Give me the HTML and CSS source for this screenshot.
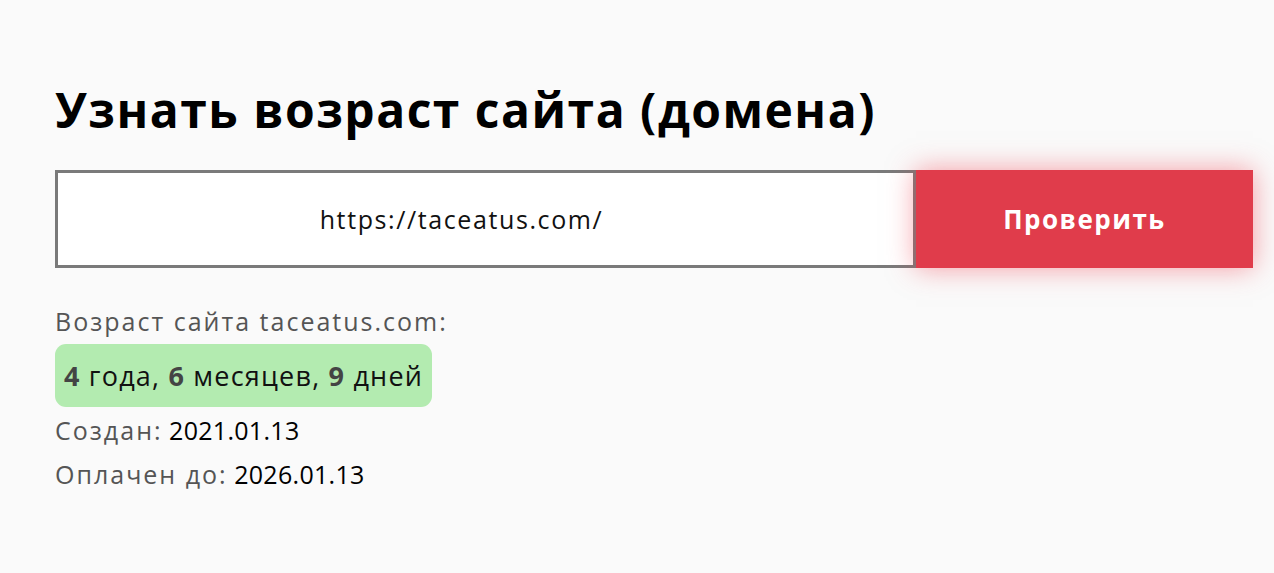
FILE: index.html
```html
<!DOCTYPE html>
<html lang="ru">
<head>
<meta charset="utf-8">
<title>Узнать возраст сайта</title>
<link rel="stylesheet" href="styles.css">
</head>
<body>
<main class="page">
  <h1 class="title">Узнать возраст сайта (домена)</h1>
  <form class="search">
    <div class="search-input">https://taceatus.com/</div>
    <button class="search-btn" type="button">Проверить</button>
  </form>
  <div class="result">
    <div class="result-head">Возраст сайта taceatus.com:</div>
    <div class="age"><b>4</b> года, <b>6</b> месяцев, <b>9</b> дней</div>
    <div class="row"><span class="label">Создан:</span> <span class="val">2021.01.13</span></div>
    <div class="row"><span class="label">Оплачен до:</span> <span class="val">2026.01.13</span></div>
  </div>
</main>
</body>
</html>
```
FILE: styles.css
```css
html, body {
  margin: 0;
  padding: 0;
  background: #fafafa;
}
body {
  font-family: "Open Sans", "Noto Sans", sans-serif;
  color: #000;
}
.page {
  padding: 78px 21px 0 55px;
}
.title {
  margin: 0;
  font-size: 48px;
  font-weight: 700;
  line-height: 64px;
  letter-spacing: 1.5px;
}
.search {
  display: flex;
  margin-top: 28px;
  height: 98px;
}
.search-input {
  box-sizing: border-box;
  width: 861px;
  height: 98px;
  border: 3px solid #7a7a7a;
  background: #fff;
  display: flex;
  align-items: center;
  justify-content: center;
  padding-right: 48px;
  font-size: 25px;
  letter-spacing: 1.6px;
  color: #111;
}
.search-btn {
  width: 337px;
  height: 98px;
  border: 0;
  background: #e03c4b;
  color: #fff;
  font-family: inherit;
  font-size: 26px;
  font-weight: 700;
  letter-spacing: 1.5px;
  box-shadow: 0 0 26px rgba(240, 60, 75, 0.5);
}
.result {
  margin-top: 34px;
  font-size: 25px;
}
.result-head {
  color: #555;
  line-height: 38px;
  letter-spacing: 2px;
}
.age {
  display: inline-block;
  margin-top: 4px;
  margin-bottom: 1px;
  background: #b3ebb0;
  border-radius: 11px;
  padding: 0 9px;
  line-height: 63px;
  font-size: 27px;
  letter-spacing: 1.2px;
  color: #111;
}
.age b {
  color: #444;
}
.row {
  line-height: 44px;
}
.label {
  color: #555;
  letter-spacing: 2px;
}
.val {
  color: #000;
  letter-spacing: 0.3px;
}
```
